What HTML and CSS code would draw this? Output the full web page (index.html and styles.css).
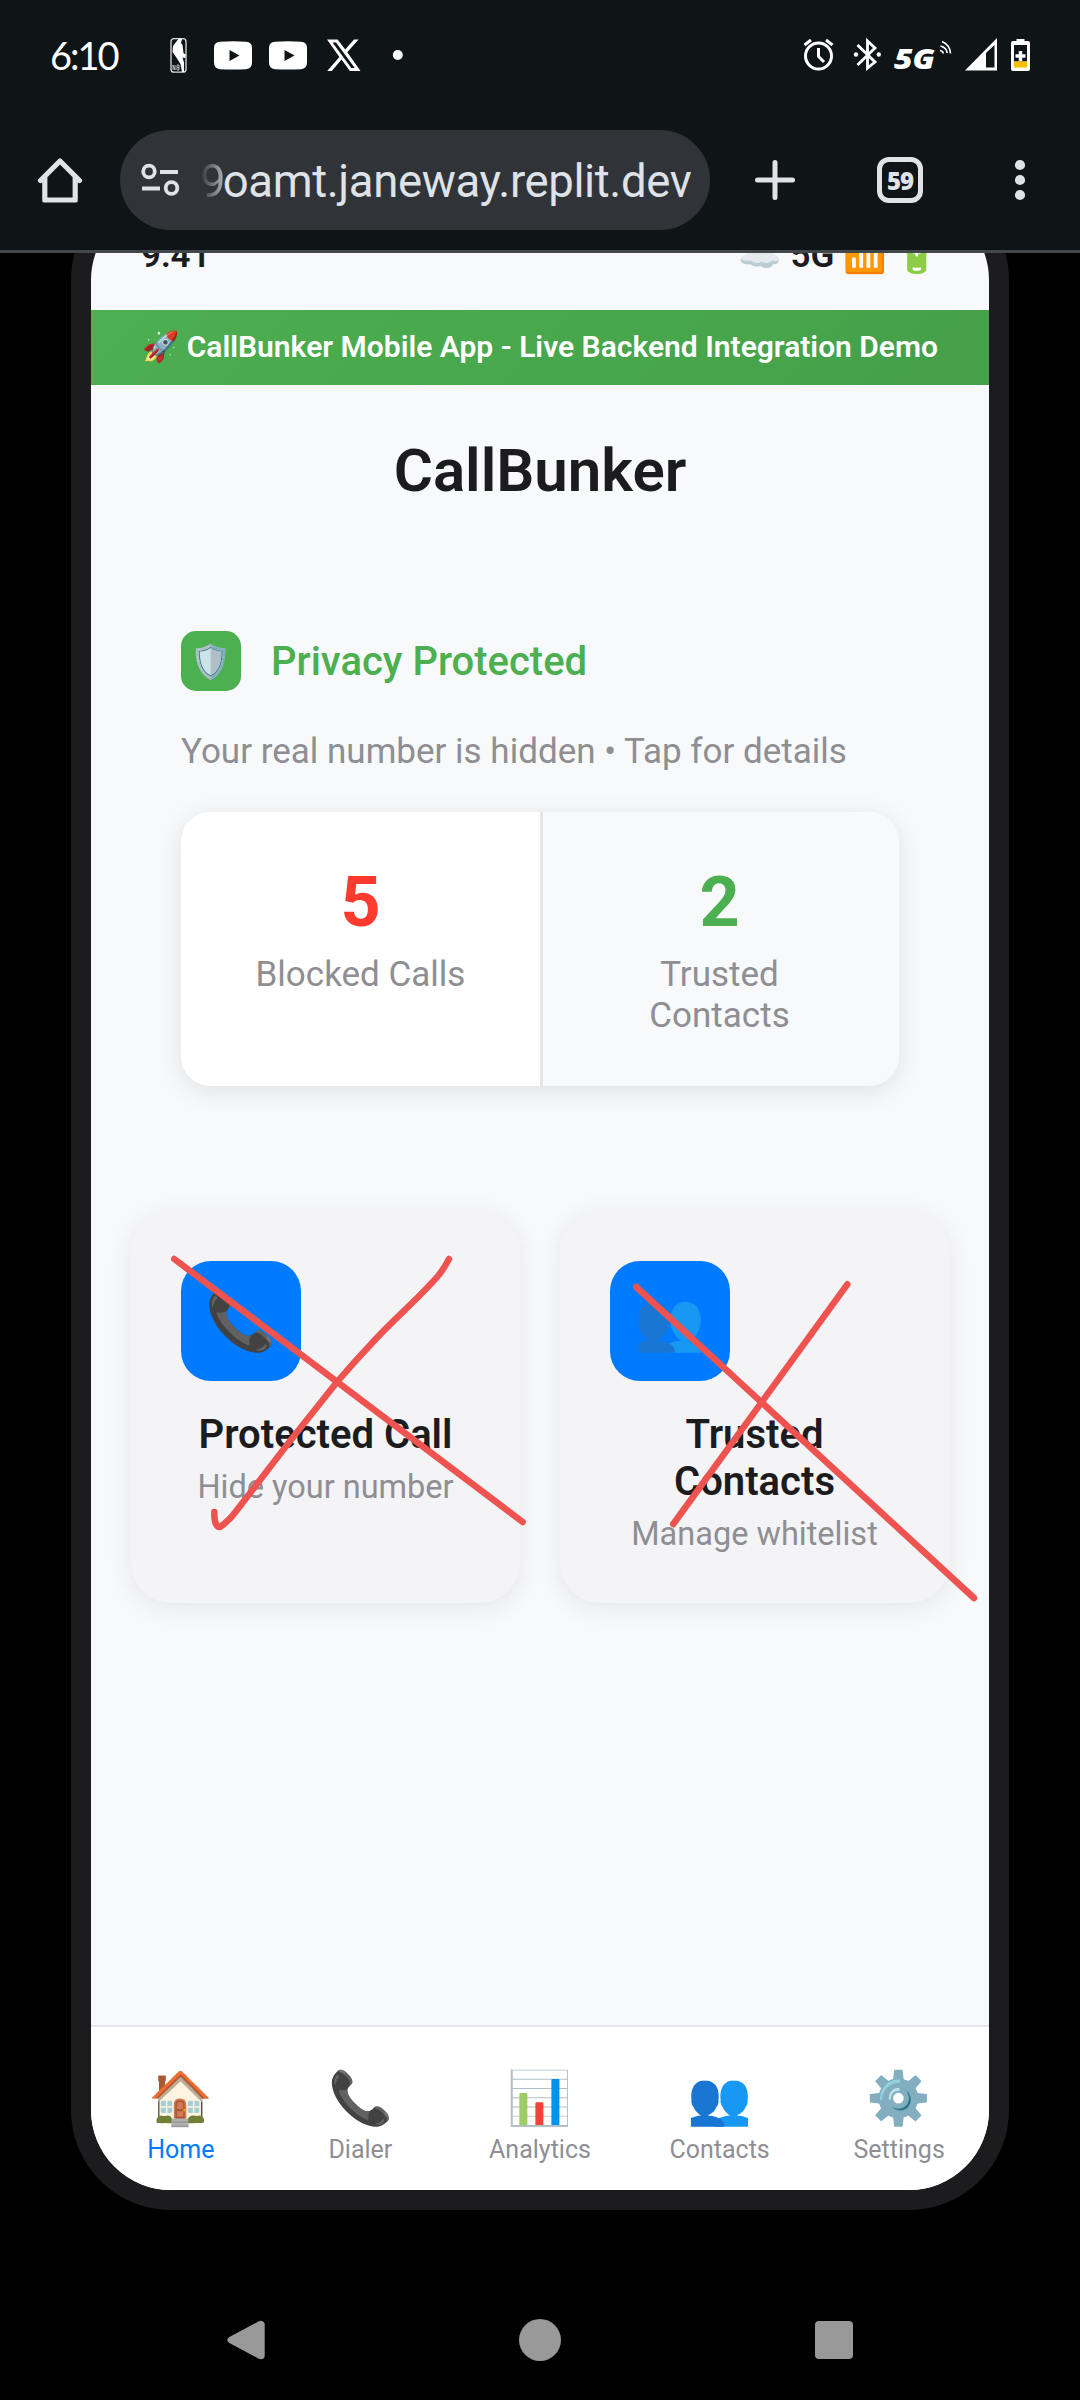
FILE: index.html
```html
<!DOCTYPE html>
<html lang="en">
<head>
<meta charset="utf-8">
<title>CallBunker</title>
<link rel="stylesheet" href="styles.css">
</head>
<body>
<header class="chrome">
  <div class="sysbar">
    <span class="clock">6:10</span>
    <svg class="sys-left" width="240" height="40" viewBox="166 35 240 40" fill="#fff">
      <rect x="171" y="38.7" width="15" height="33.500" rx="3" fill="none" stroke="#ddd" stroke-width="1.3"/>
      <path d="M178.500 39h3.500l-1 4 1.500 2 1 8 2.500 2-1 3-2.500-.5 1.500 5v9.500h-2l-1.500-8-4.500-7-3.500-5 .5-6 3-4z"/>
      <path d="M173 70v-5l2 5v-5M177 65v5h2v-5zM177 67.500h2" stroke="#ccc" stroke-width=".9" fill="none"/>
      <path fill-rule="evenodd" d="M220 41.700q13-.8 26 0 6 .5 6 6v15q0 5.500-6 6.500-13 .8-26 0-6-1-6-6.500v-15q0-5.500 6-6zM229.500 50v11l10-5.500z"/>
      <path fill-rule="evenodd" d="M275 41.700q13-.8 26 0 6 .5 6 6v15q0 5.500-6 6.500-13 .8-26 0-6-1-6-6.500v-15q0-5.500 6-6zM284.500 50v11l10-5.500z"/>
      <path fill-rule="evenodd" d="M327 39.500h10.600l7.600 10L354 39.500h4.600l-11.300 12.800L360.500 71h-10.600l-8.400-11.400L331.800 71h-4.600l12.200-14zM332.500 42.500L351.300 68h3.500L336 42.500z"/>
      <circle cx="397.800" cy="55" r="5"/>
    </svg>
    <svg class="sys-right" width="232" height="40" viewBox="801 35 232 40" fill="none" stroke="#fff">
      <circle cx="818.500" cy="56" r="13" stroke-width="3"/>
      <path d="M818.500 48v8.500l5.500 5.500M804.500 45l6.500-5M832.500 45l-6.500-5" stroke-width="3"/>
      <path d="M857.500 45l17.500 17-7.500 6V41l7.500 7-17.500 17" stroke-width="2.800"/>
      <circle cx="856" cy="54.500" r="2.200" fill="#fff" stroke="none"/><circle cx="878.800" cy="54.500" r="2.200" fill="#fff" stroke="none"/>
      <text class="fiveg" x="894" y="69" textLength="41" lengthAdjust="spacingAndGlyphs">5G</text>
      <path d="M940 50.500q3 .5 3.300 3M940.500 46q6 1.500 6.700 7M942 41.500q8 3.500 8.500 12" stroke-width="1.700"/>
      <path d="M965 70.500L997 38v32.500z" fill="#fff" stroke="none"/><path d="M986 53l8.500-8v22.500H986z" fill="#0f1417" stroke="none"/>
      <path d="M1016.500 39h8v2h3.500q2 0 2 2v26q0 2-2 2h-15q-2 0-2-2V43q0-2 2-2h3.500z" fill="#fff" stroke="none"/>
      <path d="M1014 45h13V61.500h-13z" fill="#0f1417" stroke="none"/><path d="M1014 61.500h13V67.500h-13z" fill="#fbbc04" stroke="none"/>
      <path d="M1020.500 51v10M1015.500 56h10" stroke-width="3.400"/>
    </svg>
  </div>
  <div class="toolbar">
    <svg class="home" width="46" height="46" viewBox="0 0 46 46" fill="none" stroke="#dfe2e7" stroke-width="5.200" stroke-linejoin="round" stroke-linecap="round"><path d="M3.500 23.500L23 4l19.500 19.500M7.800 20v23h30.400V20"/></svg>
    <div class="pill">
      <svg width="40" height="34" viewBox="0 0 40 34" fill="none" stroke="#dfe2e7" stroke-width="3.800"><circle cx="8" cy="8.500" r="5.800"/><path d="M19 9h18M1 25.500h18"/><circle cx="30.500" cy="25" r="5.800"/></svg>
      <span class="url"><span class="fade">9</span>oamt.janeway.replit.dev</span>
    </div>
    <svg class="plus" width="42" height="42" viewBox="0 0 42 42" stroke="#dfe2e7" stroke-width="5" stroke-linecap="round"><path d="M21 3.500v35M3.500 21h35"/></svg>
    <div class="tabs">59</div>
    <svg class="dots" width="12" height="42" viewBox="0 0 12 42" fill="#dfe2e7"><circle cx="6" cy="6" r="5.100"/><circle cx="6" cy="21" r="5.100"/><circle cx="6" cy="36" r="5.100"/></svg>
  </div>
</header>
<main class="viewport">
  <div class="phone">
    <div class="app-status"><span>9:41</span><span>☁️ 5G 📶 🔋</span></div>
    <div class="banner">🚀 CallBunker Mobile App - Live Backend Integration Demo</div>
    <div class="content">
      <h1>CallBunker</h1>
      <section class="privacy">
        <div class="privacy-row"><div class="shield">🛡️</div><h2>Privacy Protected</h2></div>
        <p>Your real number is hidden • Tap for details</p>
        <div class="stats">
          <div class="stat blocked"><b>5</b><span>Blocked Calls</span></div>
          <div class="stat trusted"><b>2</b><span>Trusted Contacts</span></div>
        </div>
      </section>
      <section class="actions">
        <div class="card"><div class="card-icon">📞</div><h3>Protected Call</h3><p>Hide your number</p></div>
        <div class="card"><div class="card-icon">👥</div><h3>Trusted Contacts</h3><p>Manage whitelist</p></div>
      </section>
    </div>
    <nav class="tabbar">
      <div class="tab active"><i>🏠</i><span>Home</span></div>
      <div class="tab"><i>📞</i><span>Dialer</span></div>
      <div class="tab"><i>📊</i><span>Analytics</span></div>
      <div class="tab"><i>👥</i><span>Contacts</span></div>
      <div class="tab"><i>⚙️</i><span>Settings</span></div>
    </nav>
  </div>
</main>
<footer class="sysnav">
  <svg width="40" height="46" viewBox="0 0 40 46"><path d="M6 23L36 5v36z" fill="#999" stroke="#999" stroke-width="8" stroke-linejoin="round" transform="translate(0.500 3) scale(.98 .87)"/></svg>
  <svg width="42" height="42" viewBox="0 0 42 42"><circle cx="21" cy="21" r="21" fill="#999"/></svg>
  <svg width="38" height="38" viewBox="0 0 38 38"><rect width="38" height="38" rx="4" fill="#999"/></svg>
</footer>
<svg class="ink" width="1080" height="2400" viewBox="0 0 1080 2400" fill="none" stroke="#ef5350" stroke-width="6.500" stroke-linecap="round" stroke-linejoin="round">
  <path d="M174.300 1259L522.700 1522"/>
  <path d="M449 1259Q443 1270 438 1276C420 1297 392 1321 373 1342Q355 1361 337 1382L290 1441 237 1510Q229 1521 220 1527Q214 1527 214.300 1512"/>
  <path d="M636.300 1287L974 1598M847.300 1284.300L673.300 1524"/>
</svg>
</body>
</html>
```

FILE: styles.css
```css
* { box-sizing: border-box; margin: 0; padding: 0; }
body {
  width: 1080px; height: 2400px; overflow: hidden; position: relative;
  display: flex; flex-direction: column;
  background: #000; color: #1c1c1e;
  font-family: Roboto, "Noto Color Emoji", sans-serif;
}
svg { display: block; flex: none; }

.chrome { height: 253px; background: #0f1417; border-bottom: 3px solid #42474b; flex: none; }
.sysbar { height: 110px; display: flex; align-items: center; padding: 0 47px 0 50px; }
.clock { width: 116px; color: #fff; font: 38px Lato, sans-serif; letter-spacing: -2px; line-height: 50px; }
.sys-right { margin-left: auto; overflow: visible; }
.fiveg { font: italic 900 28px "Open Sans", sans-serif; fill: #fff; stroke: none; }
.toolbar { height: 140px; display: flex; align-items: center; padding-left: 37px; }
.pill {
  width: 590px; height: 100px; margin-left: 37px; padding-left: 21px; border-radius: 50px;
  display: flex; align-items: center; background: #303337;
}
.url { margin-left: 19px; padding-top: 3px; font-size: 45.500px; line-height: 60px; letter-spacing: -.38px; color: #dfe2e7; white-space: nowrap; }
.fade { margin-right: -2.5px; background: linear-gradient(90deg, #303337, #b5b8bd); background-clip: text; -webkit-background-clip: text; color: transparent; }
.plus { margin-left: 44px; }
.tabs {
  width: 46px; height: 46px; margin-left: 81px; border: 5px solid #dfe2e7; border-radius: 12px;
  color: #dfe2e7; font: 800 24px/37px "Open Sans", sans-serif; text-align: center; letter-spacing: -1px;
}
.dots { margin-left: 91px; }

.viewport { height: 1997px; overflow: hidden; flex: none; }
.phone {
  width: 938px; height: 2030px; margin: -73px auto 0; overflow: hidden;
  display: flex; flex-direction: column;
  border: 20px solid #1c1c1e; border-radius: 100px; background: #f8f9fb;
}
.app-status {
  height: 110px; padding: 35px 50px 0; display: flex; justify-content: space-between;
  font-size: 35px; line-height: 41px; font-weight: 600;
}
.banner {
  height: 75px; color: #fff; font-size: 30px; line-height: 73px; font-weight: 600; text-align: center; white-space: nowrap;
  background: linear-gradient(135deg, #4caf50, #45a049);
}
.content { flex: 1; padding: 51px 40px 0; }
h1 { font-size: 60px; line-height: 70px; font-weight: 600; text-align: center; }
.privacy { padding: 125px 50px 0; }
.privacy-row { display: flex; align-items: center; gap: 30px; }
.shield {
  width: 60px; height: 60px; border-radius: 15px; background: #4caf50;
  display: flex; align-items: center; justify-content: center; font-size: 33px;
}
h2 { font-size: 40px; line-height: 47px; font-weight: 500; color: #4caf50; }
.privacy p { margin-top: 40px; font-size: 35px; line-height: 41px; color: #8e8e93; }
.stats {
  height: 274px; margin-top: 40px; display: grid; grid-template-columns: 362px 1fr; border-radius: 30px; overflow: hidden;
  box-shadow: 0 5px 25px rgba(0, 0, 0, .1);
}
.stat { padding: 50px 63px 0 60px; display: flex; flex-direction: column; align-items: center; text-align: center; }
.stat b { font-size: 70px; line-height: 80px; }
.stat span { margin-top: 12px; font-size: 35px; line-height: 41px; color: #8e8e93; }
.blocked { background: #fff; border-right: 3px solid #e5e5e7; padding: 50px 40px 0; }
.blocked b { color: #ff3b30; }
.trusted { background: #f8f9fb; }
.trusted b { color: #4caf50; }
.actions { margin-top: 125px; display: grid; grid-template-columns: 1fr 1fr; gap: 40px; }
.card {
  height: 392px; padding: 50px; border-radius: 40px; background: #f4f4f7; text-align: center;
  box-shadow: 0 5px 25px rgba(0, 0, 0, .08);
}
.card-icon {
  width: 120px; height: 120px; border-radius: 30px; background: #007aff;
  display: flex; align-items: center; justify-content: center; font-size: 57px;
}
h3 { margin-top: 30px; font-size: 40px; line-height: 47px; font-weight: 600; }
.card p { margin-top: 10px; font-size: 32.500px; line-height: 38px; color: #8e8e93; }
.tabbar { height: 165px; display: flex; border-top: 2px solid #e5e5ea; background: #fff; flex: none; }
.tab { flex: 1; padding-top: 41px; display: flex; flex-direction: column; align-items: center; font-size: 25px; line-height: 29px; color: #8e8e93; }
.tab i { height: 60px; font-style: normal; font-size: 52px; line-height: 61px; margin-bottom: 7px; color: #000; }
.tab.active { color: #007aff; }

.sysnav { height: 150px; padding: 30px 227px 0 225px; display: flex; align-items: center; justify-content: space-between; }
.ink { position: absolute; left: 0; top: 0; pointer-events: none; }
```
